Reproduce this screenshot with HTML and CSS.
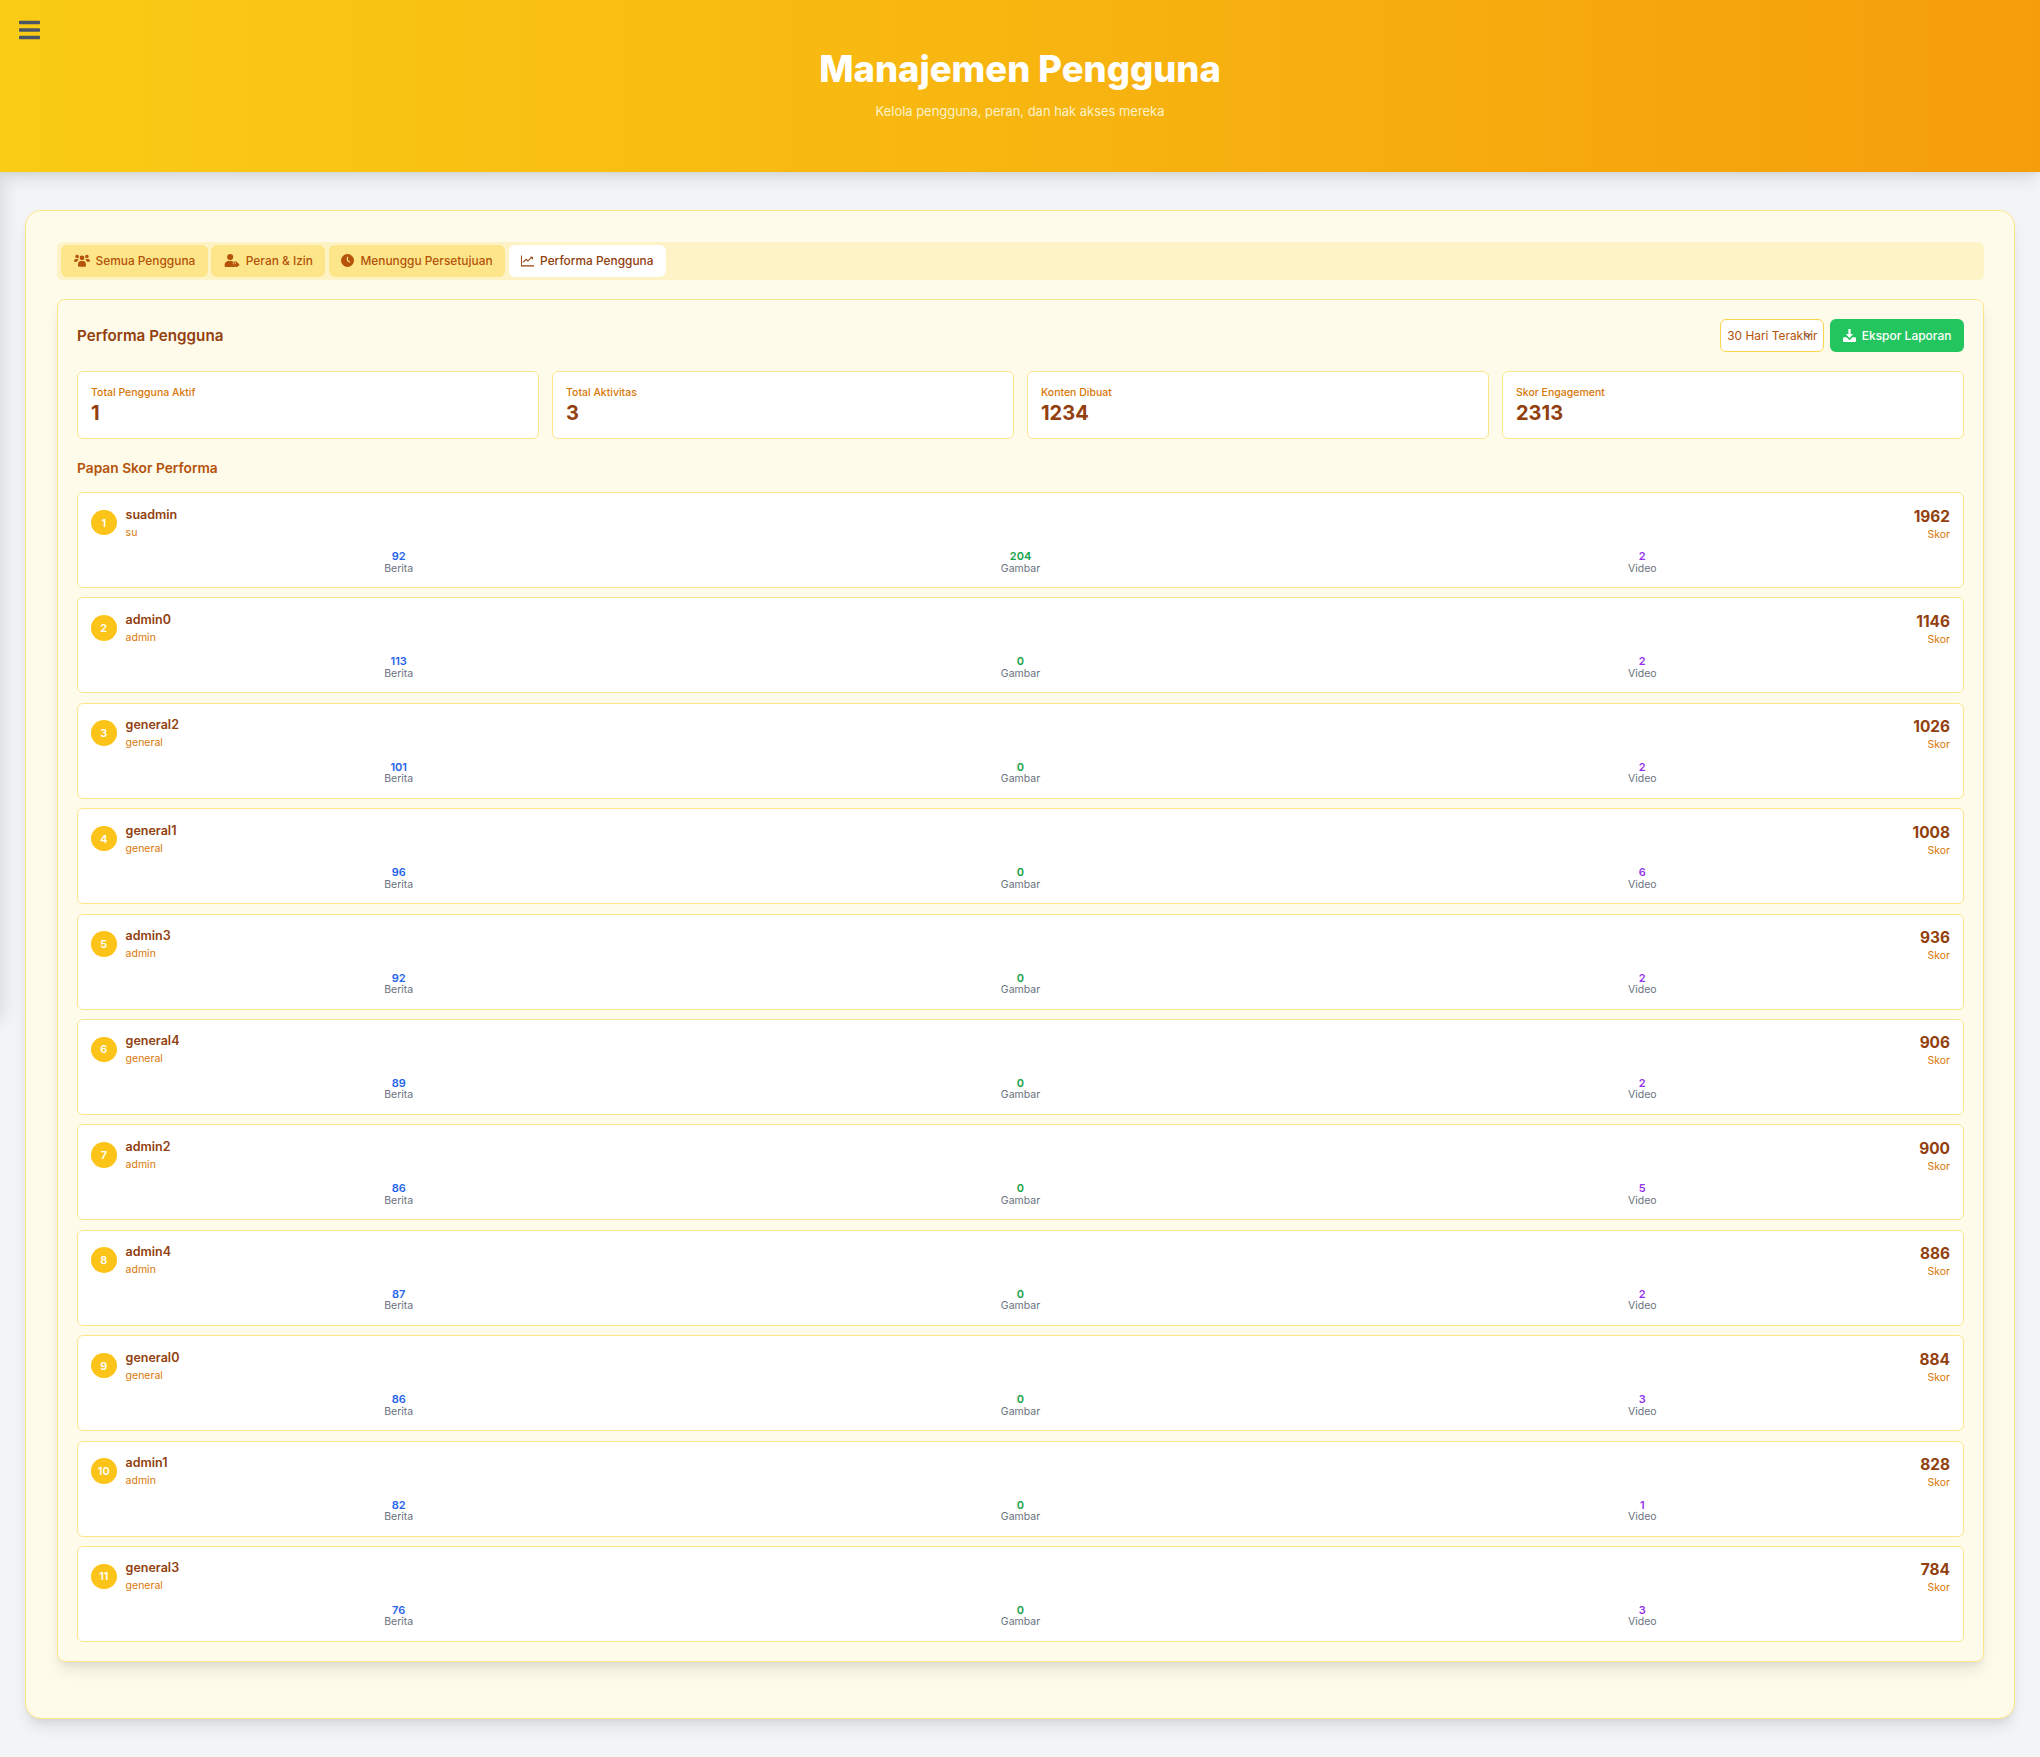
FILE: index.html
```html
<!DOCTYPE html>
<html lang="id">
<head>
  <meta charset="UTF-8" />
  <title>Manajemen Pengguna</title>
  <link rel="stylesheet" href="styles.css">
</head>
<body>
  <div class="sidebar-edge"></div>
  <header class="top">
    <button class="menu-btn" aria-label="Menu">
      <svg viewBox="0 0 448 512" width="21" height="24"><path fill="currentColor" d="M16 132h416c8.800 0 16-7.200 16-16V76c0-8.800-7.200-16-16-16H16C7.200 60 0 67.200 0 76v40c0 8.800 7.200 16 16 16zm0 160h416c8.800 0 16-7.200 16-16v-40c0-8.800-7.200-16-16-16H16c-8.800 0-16 7.200-16 16v40c0 8.800 7.200 16 16 16zm0 160h416c8.800 0 16-7.200 16-16v-40c0-8.800-7.200-16-16-16H16c-8.800 0-16 7.200-16 16v40c0 8.800 7.200 16 16 16z"/></svg>
    </button>
    <h1>Manajemen Pengguna</h1>
    <p>Kelola pengguna, peran, dan hak akses mereka</p>
  </header>

  <main class="wrap">
    <nav class="tabs">
      <a class="tab">
        <svg class="ico" viewBox="0 0 18 14" width="16" height="13"><circle cx="3.500" cy="2.500" r="2"/><circle cx="14.500" cy="2.500" r="2"/><circle cx="9" cy="4" r="2.700"/><path d="M0 8c0-2 1-2.800 2.300-2.800h2c.4 0 .8.100 1.100.300C4.300 6.200 3.700 7.300 3.600 8.500H1C.4 8.500 0 8.400 0 8zM18 8c0-2-1-2.800-2.300-2.800h-2c-.4 0-.8.100-1.100.300 1.100.700 1.700 1.800 1.800 3H17c.6 0 1-.1 1-.5zM4.500 12c0-2.700 1.300-4.500 3-4.500h3c1.700 0 3 1.800 3 4.500v.7c0 .7-.5 1.300-1.200 1.300H5.700c-.7 0-1.200-.6-1.200-1.300z"/></svg>
        Semua Pengguna
      </a>
      <a class="tab">
        <svg class="ico" viewBox="0 0 16 14" width="16" height="13"><circle cx="6" cy="3.300" r="3.300"/><path d="M0 12.600C0 9.700 1.800 7.600 4 7.600h3.700c.4 0 .8.100 1.200.2v2.500l2.600 2.900-.7.800H1.200C.5 14 0 13.400 0 12.600z"/><path fill-rule="evenodd" d="M10 8h2.700l3 3c.4.400.4.900 0 1.300L13.400 14c-.4.400-.9.400-1.300 0L9.700 11.300V8.300c0-.2.100-.3.300-.3zm1.500 1a.7.700 0 1 0 0 1.400.7.700 0 0 0 0-1.400z"/></svg>
        Peran &amp; Izin
      </a>
      <a class="tab">
        <svg class="ico" viewBox="0 0 14 14" width="13" height="13"><path fill-rule="evenodd" d="M7 0a7 7 0 1 1 0 14A7 7 0 0 1 7 0zM6.300 3v4.400l3 2 .8-1.100-2.500-1.700V3z"/></svg>
        Menunggu Persetujuan
      </a>
      <a class="tab active">
        <svg class="ico" viewBox="0 0 14 12" width="13" height="12"><path d="M1 0v10.700h13V12H0V0z"/><path d="M2.500 7.800l3-3 2 2L11 3l1.800 1.600V1.300H9.500l.9.900-2.900 3-2-2L1.700 7z" /></svg>
        Performa Pengguna
      </a>
    </nav>

    <section class="panel">
      <div class="panel-head">
        <h2>Performa Pengguna</h2>
        <div class="panel-tools">
          <select class="range">
            <option>30 Hari Terakhir</option>
            <option>7 Hari Terakhir</option>
          </select>
          <button class="export">
            <svg class="ico" viewBox="0 0 14 14" width="13" height="13"><path d="M5.800 0h2.400v5.500H11L7 9.700 3 5.500h2.800z"/><path d="M1 9h2.800L7 12l3.200-3H13c.6 0 1 .4 1 1v3c0 .6-.4 1-1 1H1c-.6 0-1-.4-1-1v-3c0-.6.400-1 1-1z"/></svg>
            Ekspor Laporan
          </button>
        </div>
      </div>

      <div class="stats">
        <div class="stat"><span class="stat-label">Total Pengguna Aktif</span><strong>1</strong></div>
        <div class="stat"><span class="stat-label">Total Aktivitas</span><strong>3</strong></div>
        <div class="stat"><span class="stat-label">Konten Dibuat</span><strong>1234</strong></div>
        <div class="stat"><span class="stat-label">Skor Engagement</span><strong>2313</strong></div>
      </div>

      <h3>Papan Skor Performa</h3>

      <div class="board">
        <div class="row">
          <div class="row-top">
            <span class="rank">1</span>
            <div class="who"><b>suadmin</b><small>su</small></div>
            <div class="score"><b>1962</b><small>Skor</small></div>
          </div>
          <div class="counts">
            <div><b class="c-news">92</b><span>Berita</span></div>
            <div><b class="c-img">204</b><span>Gambar</span></div>
            <div><b class="c-vid">2</b><span>Video</span></div>
          </div>
        </div>
        <div class="row">
          <div class="row-top">
            <span class="rank">2</span>
            <div class="who"><b>admin0</b><small>admin</small></div>
            <div class="score"><b>1146</b><small>Skor</small></div>
          </div>
          <div class="counts">
            <div><b class="c-news">113</b><span>Berita</span></div>
            <div><b class="c-img">0</b><span>Gambar</span></div>
            <div><b class="c-vid">2</b><span>Video</span></div>
          </div>
        </div>
        <div class="row">
          <div class="row-top">
            <span class="rank">3</span>
            <div class="who"><b>general2</b><small>general</small></div>
            <div class="score"><b>1026</b><small>Skor</small></div>
          </div>
          <div class="counts">
            <div><b class="c-news">101</b><span>Berita</span></div>
            <div><b class="c-img">0</b><span>Gambar</span></div>
            <div><b class="c-vid">2</b><span>Video</span></div>
          </div>
        </div>
        <div class="row">
          <div class="row-top">
            <span class="rank">4</span>
            <div class="who"><b>general1</b><small>general</small></div>
            <div class="score"><b>1008</b><small>Skor</small></div>
          </div>
          <div class="counts">
            <div><b class="c-news">96</b><span>Berita</span></div>
            <div><b class="c-img">0</b><span>Gambar</span></div>
            <div><b class="c-vid">6</b><span>Video</span></div>
          </div>
        </div>
        <div class="row">
          <div class="row-top">
            <span class="rank">5</span>
            <div class="who"><b>admin3</b><small>admin</small></div>
            <div class="score"><b>936</b><small>Skor</small></div>
          </div>
          <div class="counts">
            <div><b class="c-news">92</b><span>Berita</span></div>
            <div><b class="c-img">0</b><span>Gambar</span></div>
            <div><b class="c-vid">2</b><span>Video</span></div>
          </div>
        </div>
        <div class="row">
          <div class="row-top">
            <span class="rank">6</span>
            <div class="who"><b>general4</b><small>general</small></div>
            <div class="score"><b>906</b><small>Skor</small></div>
          </div>
          <div class="counts">
            <div><b class="c-news">89</b><span>Berita</span></div>
            <div><b class="c-img">0</b><span>Gambar</span></div>
            <div><b class="c-vid">2</b><span>Video</span></div>
          </div>
        </div>
        <div class="row">
          <div class="row-top">
            <span class="rank">7</span>
            <div class="who"><b>admin2</b><small>admin</small></div>
            <div class="score"><b>900</b><small>Skor</small></div>
          </div>
          <div class="counts">
            <div><b class="c-news">86</b><span>Berita</span></div>
            <div><b class="c-img">0</b><span>Gambar</span></div>
            <div><b class="c-vid">5</b><span>Video</span></div>
          </div>
        </div>
        <div class="row">
          <div class="row-top">
            <span class="rank">8</span>
            <div class="who"><b>admin4</b><small>admin</small></div>
            <div class="score"><b>886</b><small>Skor</small></div>
          </div>
          <div class="counts">
            <div><b class="c-news">87</b><span>Berita</span></div>
            <div><b class="c-img">0</b><span>Gambar</span></div>
            <div><b class="c-vid">2</b><span>Video</span></div>
          </div>
        </div>
        <div class="row">
          <div class="row-top">
            <span class="rank">9</span>
            <div class="who"><b>general0</b><small>general</small></div>
            <div class="score"><b>884</b><small>Skor</small></div>
          </div>
          <div class="counts">
            <div><b class="c-news">86</b><span>Berita</span></div>
            <div><b class="c-img">0</b><span>Gambar</span></div>
            <div><b class="c-vid">3</b><span>Video</span></div>
          </div>
        </div>
        <div class="row">
          <div class="row-top">
            <span class="rank">10</span>
            <div class="who"><b>admin1</b><small>admin</small></div>
            <div class="score"><b>828</b><small>Skor</small></div>
          </div>
          <div class="counts">
            <div><b class="c-news">82</b><span>Berita</span></div>
            <div><b class="c-img">0</b><span>Gambar</span></div>
            <div><b class="c-vid">1</b><span>Video</span></div>
          </div>
        </div>
        <div class="row">
          <div class="row-top">
            <span class="rank">11</span>
            <div class="who"><b>general3</b><small>general</small></div>
            <div class="score"><b>784</b><small>Skor</small></div>
          </div>
          <div class="counts">
            <div><b class="c-news">76</b><span>Berita</span></div>
            <div><b class="c-img">0</b><span>Gambar</span></div>
            <div><b class="c-vid">3</b><span>Video</span></div>
          </div>
        </div>
      </div>
    </section>
  </main>
</body>
</html>
```

FILE: styles.css
```css
* {
  box-sizing: border-box;
}
body {
  margin: 0;
  font-family: Inter, "Noto Sans", sans-serif;
  background: #f3f4f6;
  color: #92400e;
  font-size: 11.900px;
  padding-bottom: 39px;
}
.sidebar-edge {
  position: absolute;
  left: -20px;
  top: 0;
  width: 20px;
  height: 1020px;
  box-shadow: 0 0 20px rgba(0, 0, 0, 0.15);
}
.top {
  position: relative;
  height: 172px;
  padding-top: 45px;
  text-align: center;
  color: #fff;
  background: linear-gradient(90deg, #facc15, #f59e0b);
  box-shadow: 0 10px 15px -3px rgba(0, 0, 0, 0.1), 0 4px 6px -2px rgba(0, 0, 0, 0.05);
}
.top h1 {
  margin: 0;
  font-size: 36.400px;
  line-height: 48px;
  font-weight: 800;
}
.top p {
  margin: 8px 0 0;
  font-size: 12.950px;
  line-height: 20px;
  color: #fef3c7;
}
.menu-btn {
  position: absolute;
  left: 19px;
  top: 18px;
  padding: 0;
  border: 0;
  background: none;
  color: #4b5563;
}
.wrap {
  margin: 38px 25px 0;
  padding: 31px 30px 56px 31px;
  background: #fffbeb;
  border: 1px solid #fde68a;
  border-radius: 16px;
  box-shadow: 0 10px 15px -3px rgba(0, 0, 0, 0.1), 0 4px 6px -2px rgba(0, 0, 0, 0.05);
}
.tabs {
  display: flex;
  gap: 3.500px;
  height: 38px;
  padding: 3px 4px;
  background: #fef3c7;
  border-radius: 6px;
}
.tab {
  display: flex;
  align-items: center;
  gap: 6px;
  padding: 0 12.500px 1px;
  background: #fde68a;
  color: #b45309;
  border-radius: 6px;
  font-weight: 500;
}
.tab.active {
  background: #fff;
  color: #92400e;
}
.ico {
  fill: currentColor;
  flex: none;
}
.panel {
  margin-top: 19px;
  padding: 19px;
  background: #fffbeb;
  border: 1px solid #fde68a;
  border-radius: 8px;
  box-shadow: 0 10px 15px -3px rgba(0, 0, 0, 0.1), 0 4px 6px -2px rgba(0, 0, 0, 0.05);
}
.panel-head {
  display: flex;
  justify-content: space-between;
  align-items: center;
  margin-bottom: 19px;
}
.panel-head h2 {
  margin: 0;
  font-size: 15.200px;
  font-weight: 600;
}
.panel-tools {
  display: flex;
  gap: 6px;
}
.range {
  appearance: none;
  width: 104px;
  height: 33px;
  padding: 0 0 0 6px;
  background: #fff url("data:image/svg+xml,%3Csvg xmlns='http://www.w3.org/2000/svg' viewBox='0 0 20 20'%3E%3Cpath fill='none' stroke='%236b7280' stroke-width='2' stroke-linecap='round' stroke-linejoin='round' d='M6 8l4 4 4-4'/%3E%3C/svg%3E") no-repeat right 8px center / 15px;
  border: 1px solid #fcd34d;
  border-radius: 6px;
  color: #b45309;
  font: 11.900px Inter, sans-serif;
}
.export {
  display: flex;
  align-items: center;
  gap: 6px;
  height: 33px;
  padding: 0 12.500px;
  border: 0;
  border-radius: 6px;
  background: #22c55e;
  color: #fff;
  font: 500 12px Inter, sans-serif;
}
.stats {
  display: grid;
  grid-template-columns: repeat(4, 1fr);
  gap: 13px;
}
.stat {
  height: 68px;
  padding: 13px;
  background: #fff;
  border: 1px solid #fde68a;
  border-radius: 6px;
}
.stat-label {
  display: block;
  font-size: 10.500px;
  line-height: 15px;
  font-weight: 500;
  color: #d97706;
}
.stat strong {
  display: block;
  font-size: 20px;
  line-height: 26px;
  font-weight: 700;
}
.panel h3 {
  margin: 19px 0 14px;
  font-size: 13.750px;
  line-height: 20px;
  font-weight: 600;
  color: #b45309;
}
.board {
  display: flex;
  flex-direction: column;
  gap: 9.400px;
}
.row {
  height: 96px;
  padding: 11px 13px;
  background: #fff;
  border: 1px solid #fde68a;
  border-radius: 6px;
}
.row-top {
  display: flex;
  align-items: center;
  height: 37px;
  margin-bottom: 9px;
}
.rank {
  display: flex;
  align-items: center;
  justify-content: center;
  width: 25.600px;
  height: 25.600px;
  margin-right: 9px;
  border-radius: 50%;
  background: #fcc419;
  color: #fff;
  font-size: 11px;
  font-weight: 600;
}
.who {
  flex: 1;
}
.who b,
.who small,
.score b,
.score small {
  display: block;
}
.who b {
  font-size: 12.500px;
  line-height: 19px;
  font-weight: 600;
}
.who small,
.score small {
  margin-top: 1px;
  font-size: 10.500px;
  line-height: 16px;
  color: #d97706;
}
.score {
  align-self: flex-start;
  padding-top: 2.500px;
  text-align: right;
}
.score b {
  font-size: 15.400px;
  line-height: 20px;
  font-weight: 700;
}
.score small {
  margin-top: 0;
}
.counts {
  display: grid;
  grid-template-columns: repeat(3, 1fr);
  gap: 6.400px;
  text-align: center;
}
.counts b,
.counts span {
  display: block;
  font-size: 10.500px;
  line-height: 12.500px;
}
.counts b {
  font-size: 11px;
  font-weight: 600;
}
.counts span {
  color: #6b7280;
}
.c-news {
  color: #2563eb;
}
.c-img {
  color: #16a34a;
}
.c-vid {
  color: #9333ea;
}
```
